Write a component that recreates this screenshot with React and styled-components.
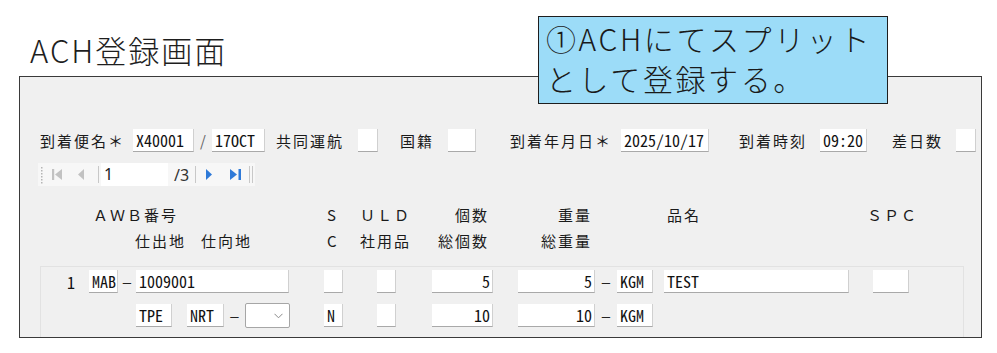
import React from 'react';
import styled, { createGlobalStyle } from 'styled-components';

const GlobalStyle = createGlobalStyle`
  body {
    margin: 0;
    background: #ffffff;
    font-family: "Noto Sans CJK JP", "Noto Sans", sans-serif;
    color: #1a1a1a;
  }
`

const MONO = `"Noto Sans Mono CJK JP", "Liberation Mono", monospace`

export default function App() {
  return (
    <Page>
      <GlobalStyle />
      <Title>ACH登録画面</Title>
      <Panel>
        <FlightRow>
          <Label>到着便名＊</Label>
          <Field $w={61} $ml={8}>X40001</Field>
          <Slash>/</Slash>
          <Field $w={53}>17OCT</Field>
          <Label $ml={11}>共同運航</Label>
          <Field $w={20} $ml={14} />
          <Label $ml={22}>国籍</Label>
          <Field $w={28} $ml={14} />
          <Label $ml={34}>到着年月日＊</Label>
          <Field $w={88} $ml={9}>2025/10/17</Field>
          <Label $ml={30}>到着時刻</Label>
          <Field $w={47} $ml={13}>09:20</Field>
          <Label $ml={25}>差日数</Label>
          <Field $w={20} $ml={13} />
        </FlightRow>

        <Pager>
          <svg width="2" height="18" style={{ marginLeft: 3 }}>
            {[0, 3, 6, 9, 12, 15].map(y => <rect key={y} x="0" y={y + 1} width="1.5" height="1.5" fill="#b5b5b5" />)}
          </svg>
          <PagerIcon width="10" height="11" viewBox="0 0 10 11" $ml={9}>
            <rect x="0" y="0" width="2.2" height="11" fill="#c2c2c2" />
            <path d="M10 0 L3 5.5 L10 11 Z" fill="#c2c2c2" />
          </PagerIcon>
          <PagerIcon width="6" height="11" viewBox="0 0 6 11" $ml={16}>
            <path d="M6 0 L0 5.5 L6 11 Z" fill="#c2c2c2" />
          </PagerIcon>
          <ToolSep $ml={14} />
          <PageInput>1</PageInput>
          <PageTotal>/3</PageTotal>
          <ToolSep $ml={6} />
          <PagerIcon width="6" height="11" viewBox="0 0 6 11" $ml={10}>
            <path d="M0 0 L6 5.5 L0 11 Z" fill="#2f7ad8" />
          </PagerIcon>
          <PagerIcon width="11" height="11" viewBox="0 0 11 11" $ml={18}>
            <path d="M0 0 L7 5.5 L0 11 Z" fill="#2f7ad8" />
            <rect x="8.5" y="0" width="2.5" height="11" fill="#2f7ad8" />
          </PagerIcon>
          <ToolSep $ml={8} />
          <ToolSep $ml={2} />
        </Pager>

        <ColumnHead>
          <HCell $col="2 / 5" $row={1}>ＡＷＢ番号</HCell>
          <HCell $col="5" $row={1}>S</HCell>
          <HCell $col="6" $row={1}>ＵＬＤ</HCell>
          <HCell $col="7" $row={1} $right>個数</HCell>
          <HCell $col="8" $row={1} $right>重量</HCell>
          <HCell $col="10" $row={1}>品名</HCell>
          <HCell $col="11" $row={1}>ＳＰＣ</HCell>

          <HCell $col="3" $row={2}>仕出地</HCell>
          <HCell $col="4" $row={2}>仕向地</HCell>
          <HCell $col="5" $row={2}>C</HCell>
          <HCell $col="6" $row={2}>社用品</HCell>
          <HCell $col="7" $row={2} $right>総個数</HCell>
          <HCell $col="8" $row={2} $right>総重量</HCell>
        </ColumnHead>

        <DetailBox>
          <DetailRow>
            <RowIndex>1</RowIndex>
            <Field $w={29} $ml={14}>MAB</Field>
            <Dash $w={18}>–</Dash>
            <Field $w={153}>1009001</Field>
            <Field $w={19} $ml={35} />
            <Field $w={19} $ml={34} />
            <Field $w={61} $ml={36} $right>5</Field>
            <Field $w={77} $ml={25} $right>5</Field>
            <Dash $w={22}>–</Dash>
            <Field $w={36}>KGM</Field>
            <Field $w={185} $ml={11}>TEST</Field>
            <Field $w={36} $ml={24} />
          </DetailRow>
          <DetailRow $tall>
            <Field $w={36} $ml={95}>TPE</Field>
            <Field $w={37} $ml={15}>NRT</Field>
            <Dash $w={21}>–</Dash>
            <Select>
              <svg width="9" height="6" viewBox="0 0 9 6">
                <path d="M0.5 0.8 L4.5 4.8 L8.5 0.8" fill="none" stroke="#8a8a8a" strokeWidth="1" />
              </svg>
            </Select>
            <Field $w={19} $ml={34}>N</Field>
            <Field $w={19} $ml={34} />
            <Field $w={61} $ml={36} $right>10</Field>
            <Field $w={77} $ml={25} $right>10</Field>
            <Dash $w={22}>–</Dash>
            <Field $w={36}>KGM</Field>
          </DetailRow>
        </DetailBox>
      </Panel>

      <Callout>
        ①ACHにてスプリット<br />
        として登録する。
      </Callout>
    </Page>
  )
}

let Page = styled.div`
  position: relative;
  width: 997px;
  height: 353px;
  padding-left: 19px;
  box-sizing: border-box;
  overflow: hidden;
`

let Title = styled.div`
  box-sizing: border-box;
  height: 76px;
  padding-top: 31px;
  margin-left: 11px;
  font-size: 31px;
  font-weight: 300;
  line-height: 38px;
  letter-spacing: 2px;
  color: #1e1e1e;
`

let Panel = styled.div`
  box-sizing: border-box;
  width: 963px;
  height: 262px;
  border: 1px solid #3a3a3a;
  background: #f0f0f0;
  padding: 52px 0 0 20px;
  overflow: hidden;
`

let FlightRow = styled.div`
  display: flex;
  align-items: center;
  height: 23px;
`

let Label = styled.span`
  margin-left: ${p => p.$ml || 0}px;
  font-size: 15px;
  letter-spacing: 2px;
  white-space: nowrap;
`

let Field = styled.div`
  box-sizing: border-box;
  flex: none;
  width: ${p => p.$w}px;
  height: 23px;
  margin-left: ${p => p.$ml || 0}px;
  padding: 0 2px 0 3px;
  background: #ffffff;
  border-bottom: 1px solid #a9a9a9;
  border-right: 1px solid #d0d0d0;
  font-family: ${MONO};
  font-size: 16px;
  line-height: 22px;
  text-align: ${p => p.$right ? 'right' : 'left'};
  color: #111;
  white-space: nowrap;
  overflow: hidden;
`

let Slash = styled.span`
  width: 18px;
  text-align: center;
  font-size: 15px;
  color: #666;
`

let Dash = styled.span`
  flex: none;
  width: ${p => p.$w}px;
  text-align: center;
  font-family: "Liberation Sans", sans-serif;
  font-size: 15px;
  color: #222;
`

let Pager = styled.div`
  display: flex;
  align-items: center;
  width: 217px;
  height: 23px;
  margin: 11px 0 0 -2px;
  background: #f7f7f7;
`

let PagerIcon = styled.svg`
  flex: none;
  margin-left: ${p => p.$ml || 0}px;
`

let ToolSep = styled.div`
  flex: none;
  width: 1px;
  height: 17px;
  margin-left: ${p => p.$ml || 0}px;
  background: #c8c8c8;
`

let PageInput = styled.div`
  box-sizing: border-box;
  width: 67px;
  height: 23px;
  margin-left: 2px;
  padding-left: 3px;
  background: #ffffff;
  font-family: "Noto Sans", sans-serif;
  font-size: 16px;
  line-height: 23px;
  color: #222;
`

let PageTotal = styled.span`
  margin-left: 6px;
  font-family: "Noto Sans", sans-serif;
  font-size: 16px;
  color: #333;
`

let ColumnHead = styled.div`
  display: grid;
  grid-template-columns: 53px 42px 66px 126px 33px 60px 69px 103px 75px 200px 1fr;
  grid-auto-rows: 26px;
  align-items: center;
  margin-top: 15px;
  font-size: 15px;
  letter-spacing: 2px;
  color: #1a1a1a;
`

let HCell = styled.div`
  grid-column: ${p => p.$col};
  grid-row: ${p => p.$row};
  text-align: ${p => p.$right ? 'right' : 'left'};
  white-space: nowrap;
`

let DetailBox = styled.div`
  box-sizing: border-box;
  width: 924px;
  height: 120px;
  margin-top: 13px;
  padding-top: 3px;
  border: 1px solid #e2e2e2;
  display: flex;
  flex-direction: column;
  gap: 10px;
`

let DetailRow = styled.div`
  display: flex;
  align-items: center;
  height: ${p => p.$tall ? 25 : 23}px;
`

let RowIndex = styled.div`
  width: 34px;
  text-align: right;
  font-family: ${MONO};
  font-size: 16px;
  color: #111;
`

let Select = styled.div`
  box-sizing: border-box;
  flex: none;
  width: 45px;
  height: 25px;
  display: flex;
  align-items: center;
  justify-content: flex-end;
  padding-right: 6px;
  background: #ffffff;
  border: 1px solid #a6a6a6;
  border-radius: 2px;
`

let Callout = styled.div`
  position: absolute;
  left: 538px;
  top: 16px;
  box-sizing: border-box;
  width: 350px;
  height: 88px;
  padding: 1px 0 0 7px;
  background: #9cdcf8;
  border: 1px solid #1e1e1e;
  font-size: 30px;
  font-weight: 300;
  line-height: 40px;
  letter-spacing: 2.6px;
  color: #1a1a1a;
  white-space: nowrap;
`
